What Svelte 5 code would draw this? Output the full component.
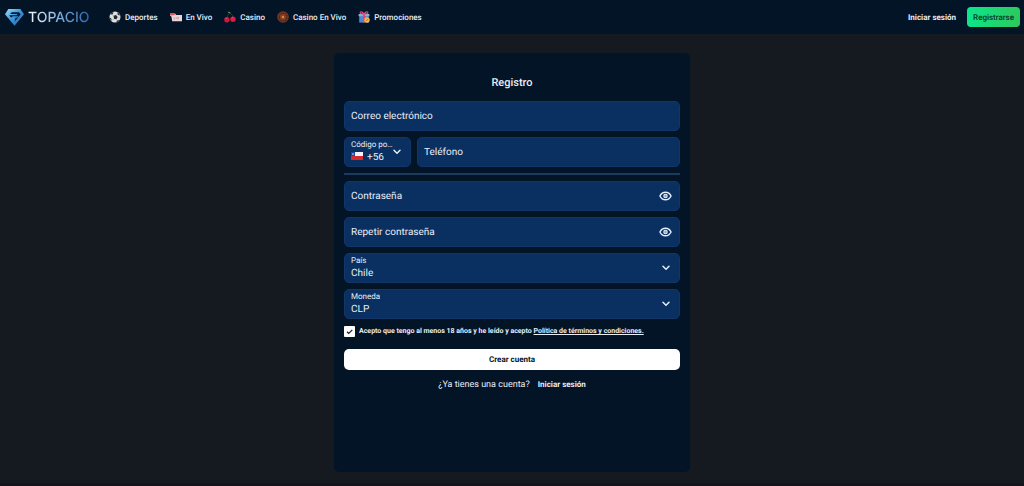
<script>
    let email = $state("");
    let phone = $state("");
    let prefix = $state("+56");
    let country = $state("Chile");
    let currency = $state("CLP");
    let accepted = $state(true);
    let passwords = $state([
        { id: "password", label: "Contraseña", value: "", visible: false },
        { id: "password2", label: "Repetir contraseña", value: "", visible: false },
    ]);
    const links = [
        { name: "Deportes", icon: "ball" },
        { name: "En Vivo", icon: "live" },
        { name: "Casino", icon: "cherry" },
        { name: "Casino En Vivo", icon: "roulette" },
        { name: "Promociones", icon: "gift" },
    ];
</script>

{#snippet chevron()}
    <svg class="chevron" viewBox="0 0 8 6" aria-hidden="true">
        <path d="M1 1.2 4 4.2 7 1.2" fill="none" stroke="#e6eefa" stroke-width="1.5" stroke-linecap="round" stroke-linejoin="round" />
    </svg>
{/snippet}

<div class="page">
    <header>
        <a class="logo" href="/">
            <svg viewBox="0 0 22 20" aria-hidden="true">
                <defs>
                    <linearGradient id="gem" x1="0" y1="0" x2="1" y2="1">
                        <stop offset="0" stop-color="#a5dcf8" />
                        <stop offset=".45" stop-color="#3f9be0" />
                        <stop offset="1" stop-color="#1b5cad" />
                    </linearGradient>
                </defs>
                <path d="M4.5 1h12.6L21 6.6 11 18.6 1 6.6z" fill="url(#gem)" />
                <path d="M8 4.4h7.6l2 2.3-2.4 2.9-4.1 4.8 1-4.2h1.6l1.5-1.6H9.2L7.4 10 5.3 7.6h7.9l1.2-1.4H6.5z" fill="#071a31" />
            </svg>
            <span>TOPACIO</span>
        </a>
        <nav>
            {#each links as { name, icon }}
                <a href="#{icon}">
                    <svg viewBox="0 0 12 12" aria-hidden="true">
                        {#if icon == "ball"}
                            <circle cx="6" cy="6" r="5.5" fill="#dfe2e2" />
                            <path d="m4.5 4.8 2.5-.7 1.6 1.8-1.1 2.3-2.4-.3zM1 3.2 3 1.2l1.6.3-1.2 2zM8.6 1.2l2.2 2.4-.4 1.2-1.9-1.5zM.6 6.4l1.6.8.5 2.2-.8.2zM7.2 11.3l.9-1.7 2-.5-.8 1.3z" fill="#20262d" />
                            <path d="M3.4 3.5 4.5 4.8M7 4.1l1.5-.8M8.6 5.9l2 1M7.5 8.2l.6 1.4M5.1 7.9 2.7 9.4" stroke="#727980" stroke-width=".4" />
                        {:else if icon == "live"}
                            <path d="M0 2.4h5l1.2 1.5H12v6.3H2.2L1.4 5.4 0 4.8z" fill="#ead7da" />
                            <path d="M0 2.4h4.2l1 1.5-3.8.6L0 4.2z" fill="#d65d64" />
                            <path d="M4 5.9v2.3h1M6.2 5.9v2.3M7.4 5.9l.6 2.3.7-2.3" fill="none" stroke="#d9737b" stroke-width=".5" />
                        {:else if icon == "cherry"}
                            <path d="M3 7.5Q3.2 3.8 6 1.8q2.8 2 3.1 5.5" fill="none" stroke="#345b41" stroke-width=".6" />
                            <path d="M3.7.8q2-.5 2.8 1.2Q4.5 2.9 3.7.8" fill="#61a65b" />
                            <circle cx="2.9" cy="8.8" r="2.7" fill="#cf173b" />
                            <circle cx="9" cy="8.3" r="2.7" fill="#df1943" />
                            <path d="M1.7 7.8q.5-.8 1.1-.8M7.8 7.3q.5-.7 1.1-.7" fill="none" stroke="#ff8ba0" stroke-width=".6" />
                        {:else if icon == "roulette"}
                            <circle cx="6" cy="6" r="5.8" fill="#733a22" />
                            <circle cx="6" cy="6" r="4.5" fill="#3a211c" />
                            <circle cx="6" cy="6" r="4.1" fill="none" stroke="#963b2c" stroke-width="1" stroke-dasharray="1.2 1" />
                            <circle cx="6" cy="6" r="3.2" fill="#884122" />
                            <circle cx="6" cy="6" r="1" fill="#e8a64d" />
                        {:else}
                            <path d="M1.2 4.6h9.6v7H1.2z" fill="#5484cf" />
                            <path d="M.6 3h10.8v2.2H.6z" fill="#83aeeb" />
                            <path d="M5 3h2v8.6H5z" fill="#df4965" />
                            <path d="M6 3Q1.5 3.2 2.3 1.1 3.7-.2 6 3q2.3-3.2 3.7-1.9Q10.5 3.2 6 3z" fill="none" stroke="#e55773" stroke-width="1.1" />
                            <circle cx="9" cy="9" r="2.7" fill="#f2b64a" />
                            <path d="m7.9 10 2.2-2" stroke="#a95c22" stroke-width=".7" />
                        {/if}
                    </svg>
                    {name}
                </a>
            {/each}
        </nav>
        <div class="actions">
            <a class="login" href="#login">Iniciar sesión</a>
            <button class="register" type="button">Registrarse</button>
        </div>
    </header>

    <main>
        <form onsubmit={(e) => e.preventDefault()}>
            <h1>Registro</h1>

            <div class="fields">
                <div class="field">
                    <label for="email" class:hidden={email}>Correo electrónico</label>
                    <input id="email" type="email" bind:value={email} />
                </div>

                <div class="phone">
                    <div class="field select prefix">
                        <label for="prefix">Código po…</label>
                        <select id="prefix" bind:value={prefix}>
                            <option>+56</option>
                            <option>+51</option>
                            <option>+54</option>
                        </select>
                        <svg class="flag" viewBox="0 0 12 8" aria-hidden="true">
                            <path d="M0 0h12v4H0z" fill="#f2f4f8" />
                            <path d="M0 4h12v4H0z" fill="#d52b2e" />
                            <path d="M0 0h4v4H0z" fill="#184b9f" />
                            <path d="m2 1 .3.7h.8l-.6.5.2.8-.7-.4-.7.4.2-.8-.6-.5h.8z" fill="#fff" />
                        </svg>
                        {@render chevron()}
                    </div>
                    <div class="field">
                        <label for="phone" class:hidden={phone}>Teléfono</label>
                        <input id="phone" type="tel" bind:value={phone} />
                    </div>
                </div>

                <hr />

                {#each passwords as item}
                    <div class="field">
                        <label for={item.id} class:hidden={item.value}>{item.label}</label>
                        <input id={item.id} type={item.visible ? "text" : "password"} bind:value={item.value} />
                        <button class="eye" type="button" aria-label="Mostrar contraseña" onclick={() => (item.visible = !item.visible)}>
                            <svg viewBox="0 0 14 10" aria-hidden="true">
                                <path d="M1 5Q3 .9 7 .9T13 5Q11 9.1 7 9.1T1 5z" fill="none" stroke="#e6eefa" stroke-width="1.5" />
                                <circle cx="7" cy="5" r="1.9" fill="#8fa9cd" stroke="#e6eefa" stroke-width="1.1" />
                            </svg>
                        </button>
                    </div>
                {/each}

                <div class="field select">
                    <label for="country">País</label>
                    <select id="country" bind:value={country}>
                        <option>Chile</option>
                        <option>Perú</option>
                        <option>Argentina</option>
                    </select>
                    {@render chevron()}
                </div>

                <div class="field select">
                    <label for="currency">Moneda</label>
                    <select id="currency" bind:value={currency}>
                        <option>CLP</option>
                        <option>USD</option>
                    </select>
                    {@render chevron()}
                </div>
            </div>

            <div class="terms">
                <input id="terms" type="checkbox" bind:checked={accepted} />
                <label for="terms">Acepto que tengo al menos 18 años y he leído y acepto <a href="#terms">Política de términos y condiciones.</a></label>
            </div>

            <button class="submit" type="submit">Crear cuenta</button>

            <p class="account">¿Ya tienes una cuenta? <a href="#login">Iniciar sesión</a></p>
        </form>
    </main>
    <footer></footer>
</div>

<style>
    :global(body) {
        background: #141a20;
    }
    .page {
        display: flex;
        flex-direction: column;
        min-height: 100vh;
        font-family: Roboto, "Liberation Sans", sans-serif;
        font-size: 10px;
        color: #e9eef6;
        text-rendering: geometricPrecision;
    }
    a {
        color: inherit;
        text-decoration: none;
    }
    button, input, select {
        font: inherit;
        color: inherit;
        box-sizing: border-box;
        margin: 0;
        text-rendering: inherit;
    }
    button {
        border: 0;
        cursor: pointer;
    }
    header {
        display: flex;
        align-items: center;
        height: 34px;
        padding: 0 4px;
        background: #041427;
    }
    .logo {
        display: flex;
        align-items: center;
        gap: 3px;
        width: 105px;
        font-family: Inter, sans-serif;
        font-size: 14px;
        font-weight: 500;
    }
    .logo svg {
        width: 21px;
        height: 19px;
    }
    .logo span {
        background: linear-gradient(90deg, #f2f7fc, #8dbbe6 45%, #2563ae);
        background-clip: text;
        color: transparent;
    }
    nav {
        display: flex;
        gap: 12px;
        font-size: 8px;
        font-weight: 500;
    }
    nav a {
        display: flex;
        align-items: center;
        gap: 4px;
    }
    nav svg {
        width: 12px;
        height: 12px;
    }
    .actions {
        display: flex;
        align-items: center;
        gap: 11px;
        margin-left: auto;
        font-size: 8px;
        font-weight: 700;
    }
    .register {
        height: 20px;
        padding: 0 6px;
        border-radius: 4px;
        background: linear-gradient(100deg, #0be78c, #2fc75c);
        color: #05351f;
        font-weight: 500;
    }
    main {
        flex: 1;
        padding: 19px 16px 11px;
    }
    form {
        box-sizing: border-box;
        max-width: 356px;
        margin: 0 auto;
        padding: 22px 10px 80px;
        border-radius: 5px;
        background: #041427;
    }
    h1 {
        margin: 0 0 10px;
        font-size: 11px;
        line-height: 16px;
        font-weight: 500;
        text-align: center;
    }
    .fields {
        display: grid;
        gap: 6px;
    }
    .phone {
        display: grid;
        grid-template-columns: 67px 1fr;
        gap: 6px;
    }
    .field {
        display: grid;
        align-items: center;
        min-width: 0;
    }
    .field > * {
        grid-area: 1 / 1;
    }
    .field > label {
        z-index: 1;
        padding: 0 7px;
        pointer-events: none;
    }
    .field input, .field select {
        width: 100%;
        height: 30px;
        padding: 0 6px;
        border: 1px solid #12366a;
        border-radius: 5px;
        background: #0a2f61;
        outline: none;
    }
    .field input:focus, .field select:focus {
        border-color: #3f7fc8;
    }
    .select select {
        appearance: none;
        padding-top: 10px;
    }
    .field.select > label {
        align-self: start;
        padding-top: 3px;
        font-size: 8px;
        line-height: 10px;
    }
    .field.prefix > label {
        padding-right: 0;
        white-space: nowrap;
    }
    .prefix select {
        padding-left: 22px;
    }
    .flag {
        align-self: end;
        width: 12px;
        height: 8px;
        margin: 0 0 7px 7px;
        pointer-events: none;
    }
    .chevron {
        justify-self: end;
        width: 8px;
        height: 6px;
        margin-right: 10px;
        pointer-events: none;
    }
    .eye {
        display: flex;
        justify-self: end;
        margin-right: 8px;
        padding: 0;
        background: none;
    }
    .eye svg {
        width: 13px;
        height: 10px;
    }
    .hidden {
        visibility: hidden;
    }
    hr {
        width: 100%;
        height: 2px;
        margin: 0;
        border: 0;
        background: #1c3a5c;
    }
    .terms {
        display: flex;
        align-items: center;
        gap: 4px;
        margin: 7px 0 12px;
        font-size: 7px;
        line-height: 11px;
        font-weight: 700;
    }
    .terms input {
        flex: none;
        width: 11px;
        height: 11px;
        border-radius: 1px;
        appearance: none;
        background: #fff;
    }
    .terms input:checked {
        background: #fff url("data:image/svg+xml,%3Csvg xmlns='http://www.w3.org/2000/svg' viewBox='0 0 11 11'%3E%3Cpath d='M3 5.8 4.7 7.4 8.3 3.8' fill='none' stroke='%23101b2b' stroke-width='1.2'/%3E%3C/svg%3E");
    }
    .terms a {
        text-decoration: underline;
    }
    .submit {
        display: block;
        width: 100%;
        height: 21px;
        border-radius: 5px;
        background: #fff;
        color: #041427;
        font-size: 8px;
        font-weight: 700;
    }
    .account {
        display: flex;
        justify-content: center;
        align-items: center;
        gap: 8px;
        margin: 8px 0 0;
        font-size: 9px;
        line-height: 14px;
    }
    .account a {
        font-size: 8px;
        font-weight: 700;
    }
    footer {
        height: 4px;
        background: #15131b;
    }
</style>
